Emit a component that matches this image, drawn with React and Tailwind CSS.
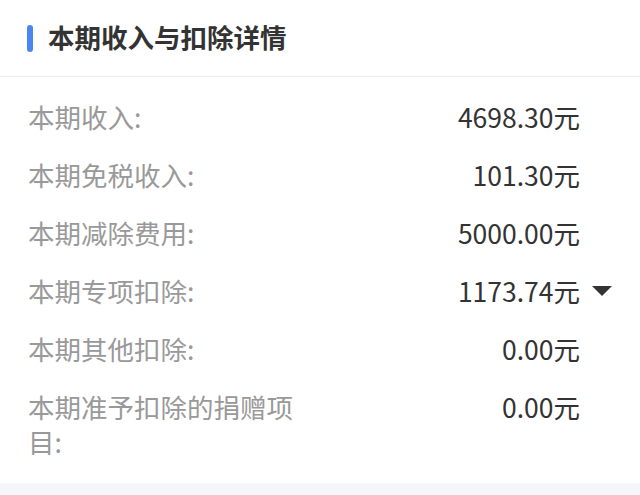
import React from "react";

const rows = [
  { label: "本期收入:", value: "4698.30元" },
  { label: "本期免税收入:", value: "101.30元" },
  { label: "本期减除费用:", value: "5000.00元" },
  { label: "本期专项扣除:", value: "1173.74元", expand: true },
  { label: "本期其他扣除:", value: "0.00元" },
  { label: "本期准予扣除的捐赠项目:", value: "0.00元" },
];

export default function App() {
  return (
    <div
      className="w-[640px] h-[495px] bg-white flex flex-col overflow-hidden"
      style={{ fontFamily: '"Noto Sans CJK SC", "Noto Sans", sans-serif' }}
    >
      {/* Header */}
      <div className="h-[77px] flex items-center pl-[27px] border-b border-[#ececec] shrink-0">
        <div className="w-[6px] h-[27px] rounded-full bg-[#4a86f0]"></div>
        <div className="ml-[15px] text-[26.5px] font-bold text-[#333] leading-none -mt-[1px]">
          本期收入与扣除详情
        </div>
      </div>

      {/* Rows */}
      <div className="flex-1 flex flex-col gap-[23px] pt-[22px] pl-[28px] pr-[28px]">
        {rows.map((row, i) => (
          <div key={i} className="flex items-start">
            <div className="w-[272px] text-[26.5px] leading-[35px] text-[#999]">
              {row.label}
            </div>
            <div className="flex-1 text-right text-[26.5px] leading-[35px] text-[#333]">
              {row.value}
            </div>
            <div className="w-[32px] h-[35px] flex items-center justify-end shrink-0">
              {row.expand && (
                <svg width="20" height="10" viewBox="0 0 20 10">
                  <polygon points="0,0 20,0 10,10" fill="#333" />
                </svg>
              )}
            </div>
          </div>
        ))}
      </div>

      <div className="h-[12px] bg-[#f4f6fa] shrink-0"></div>
    </div>
  );
}
